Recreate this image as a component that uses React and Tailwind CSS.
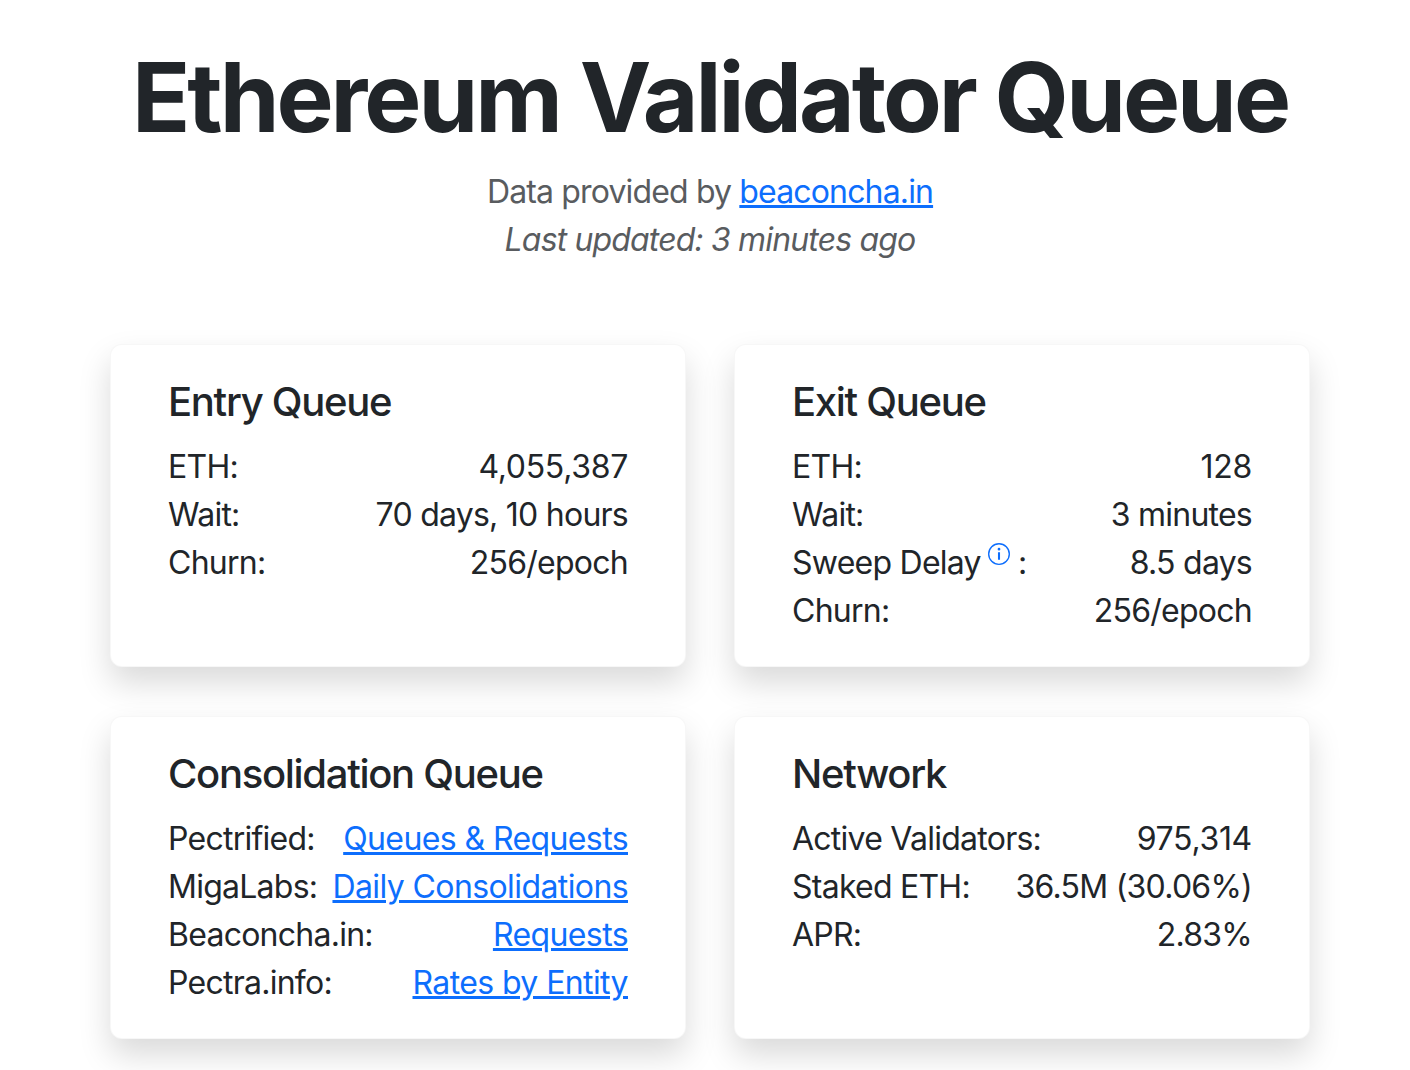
const font = { fontFamily: "Inter, 'Liberation Sans', sans-serif" };

function Row({ label, value }) {
  return (
    <div className="flex justify-between whitespace-nowrap">
      <span>{label}</span>
      <span>{value}</span>
    </div>
  );
}

function L({ children }) {
  return <a href="#" className="text-[#0d6efd] underline">{children}</a>;
}

function CL({ children }) {
  return <a href="#" className="text-[#0d6efd] underline tracking-[-0.6px]">{children}</a>;
}

function N({ children }) {
  return <span className="tracking-[-0.3px]">{children}</span>;
}

function Card({ title, children }) {
  return (
    <div className="bg-white rounded-[12px] border border-[#00000008] shadow-[0_16px_32px_rgba(0,0,0,0.15)] h-[323px] pl-[57px] pr-[57px] pt-[33px]">
      <h2 className="text-[40px] leading-[48px] font-medium mb-[16px] text-[#212529] tracking-[-1.3px]">{title}</h2>
      <div className="text-[32px] leading-[48px] text-[#212529] tracking-[-0.75px] pt-[1px]">{children}</div>
    </div>
  );
}

const Info = () => (
  <svg className="inline-block align-[9px] ml-[7px]" width="22" height="22" viewBox="0 0 16 16" fill="#0d6efd">
    <path d="M8 15A7 7 0 1 1 8 1a7 7 0 0 1 0 14m0 1A8 8 0 1 0 8 0a8 8 0 0 0 0 16" />
    <path d="M7.25 6.8h1.5v5.4h-1.5zM9 4.5a1 1 0 1 1-2 0 1 1 0 0 1 2 0" />
  </svg>
);

export default function App() {
  return (
    <div className="w-[1410px] h-[1070px] overflow-hidden bg-white">
      <div style={font} className="w-[1420px] text-[#212529]">
        <div className="text-center pt-[40px]">
          <h1 className="text-[96px] leading-[115px] font-bold tracking-[-3px] whitespace-nowrap">Ethereum Validator Queue</h1>
          <p className="text-[32px] leading-[48px] text-[#595c5f] tracking-[-0.85px] mt-[13px]">
            Data provided by <L>beaconcha.in</L>
          </p>
          <p className="text-[32px] leading-[48px] text-[#595c5f] tracking-[-0.85px] italic">Last updated: 3 minutes ago</p>
        </div>
        <div className="grid grid-cols-[576px_576px] gap-x-[48px] gap-y-[49px] ml-[110px] w-[1200px] mt-[80px]">
          <Card title="Entry Queue">
            <Row label="ETH:" value={<N>4,055,387</N>} />
            <Row label="Wait:" value="70 days, 10 hours" />
            <Row label="Churn:" value="256/epoch" />
          </Card>
          <Card title="Exit Queue">
            <Row label="ETH:" value={<N>128</N>} />
            <Row label="Wait:" value="3 minutes" />
            <Row label={<>Sweep Delay<Info /> :</>} value="8.5 days" />
            <Row label="Churn:" value="256/epoch" />
          </Card>
          <Card title="Consolidation Queue">
            <Row label="Pectrified:" value={<CL>Queues &amp; Requests</CL>} />
            <Row label="MigaLabs:" value={<CL>Daily Consolidations</CL>} />
            <Row label="Beaconcha.in:" value={<CL>Requests</CL>} />
            <Row label="Pectra.info:" value={<CL>Rates by Entity</CL>} />
          </Card>
          <Card title="Network">
            <Row label="Active Validators:" value={<N>975,314</N>} />
            <Row label="Staked ETH:" value="36.5M (30.06%)" />
            <Row label="APR:" value="2.83%" />
          </Card>
        </div>
      </div>
    </div>
  );
}
